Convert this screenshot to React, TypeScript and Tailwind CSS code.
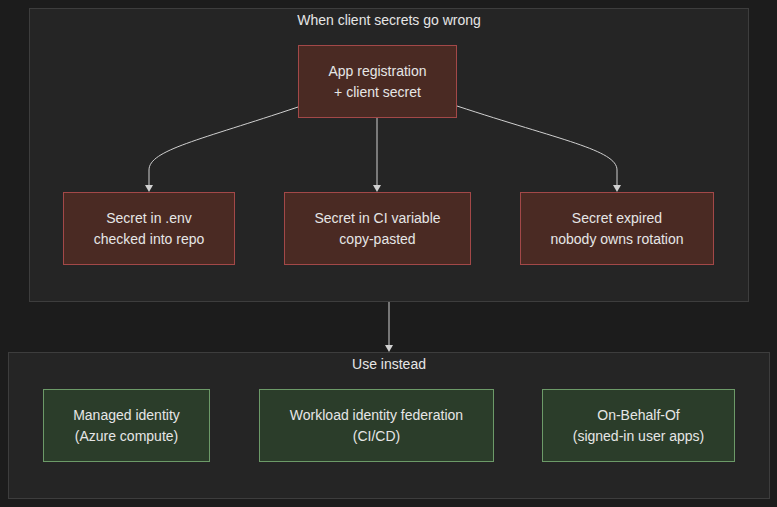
import React from 'react';

type Box = { x: number; y: number; w: number; h: number; lines: string[]; kind: 'red' | 'green' };

const nodes: Box[] = [
  { x: 298, y: 45, w: 159, h: 73, lines: ['App registration', '+ client secret'], kind: 'red' },
  { x: 63, y: 192, w: 172, h: 73, lines: ['Secret in .env', 'checked into repo'], kind: 'red' },
  { x: 284, y: 192, w: 187, h: 73, lines: ['Secret in CI variable', 'copy-pasted'], kind: 'red' },
  { x: 520, y: 192, w: 194, h: 73, lines: ['Secret expired', 'nobody owns rotation'], kind: 'red' },
  { x: 43, y: 389, w: 167, h: 73, lines: ['Managed identity', '(Azure compute)'], kind: 'green' },
  { x: 259, y: 389, w: 235, h: 73, lines: ['Workload identity federation', '(CI/CD)'], kind: 'green' },
  { x: 542, y: 389, w: 193, h: 73, lines: ['On-Behalf-Of', '(signed-in user apps)'], kind: 'green' },
];

const Node = ({ n }: { n: Box }) => (
  <div
    className={`absolute flex flex-col items-center justify-center border text-[14px] leading-[21px] text-[#e6e6e6] ${
      n.kind === 'red' ? 'bg-[#4a2a23] border-[#a34848]' : 'bg-[#2b3d2a] border-[#6c9a68]'
    }`}
    style={{ left: n.x, top: n.y, width: n.w, height: n.h }}
  >
    {n.lines.map((l) => (
      <span key={l}>{l}</span>
    ))}
  </div>
);

export default function App() {
  return (
    <div
      className="relative w-[777px] h-[507px] bg-[#1c1c1c] overflow-hidden"
      style={{ fontFamily: '"Liberation Sans", Arial, sans-serif' }}
    >
      <div className="absolute left-[29px] top-[8px] w-[720px] h-[294px] bg-[#252525] border border-[#3d3d3d]">
        <div className="text-center text-[14px] text-[#e6e6e6] mt-[1px]">When client secrets go wrong</div>
      </div>
      <div className="absolute left-[8px] top-[352px] w-[762px] h-[147px] bg-[#252525] border border-[#3d3d3d]">
        <div className="text-center text-[14px] text-[#e6e6e6] mt-[1px]">Use instead</div>
      </div>
      <svg className="absolute left-0 top-0" width="777" height="507">
        <defs>
          <marker id="a" markerWidth="8" markerHeight="8" refX="4" refY="7" orient="auto-start-reverse" viewBox="0 0 8 8">
            <path d="M0 0 L8 0 L4 8 Z" fill="#d0d0d0" transform="rotate(0)" />
          </marker>
        </defs>
        <g stroke="#d0d0d0" strokeWidth="1" fill="none">
          <path d="M298 107 C200 140 149 150 149 170 L149 185" />
          <path d="M377 118 L377 185" />
          <path d="M457 106 C560 140 617 150 617 170 L617 185" />
          <path d="M389 302 L389 345" />
        </g>
        <g fill="#d0d0d0">
          <path d="M145 185 L153 185 L149 192 Z" />
          <path d="M373 185 L381 185 L377 192 Z" />
          <path d="M613 185 L621 185 L617 192 Z" />
          <path d="M385 345 L393 345 L389 352 Z" />
        </g>
      </svg>
      {nodes.map((n) => (
        <Node key={n.lines[0]} n={n} />
      ))}
    </div>
  );
}
